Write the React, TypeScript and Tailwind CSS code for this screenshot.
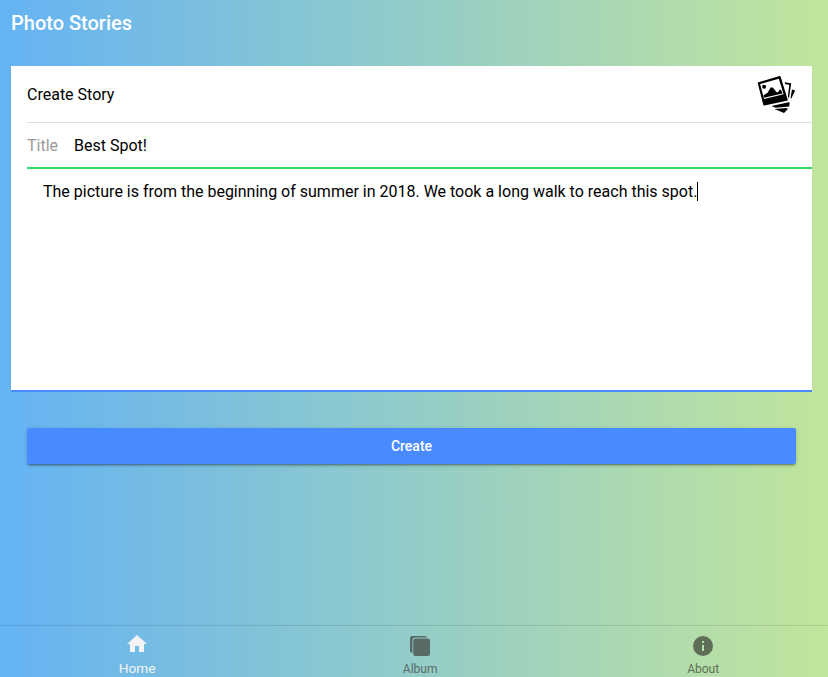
import React from "react";

function StoryIcon() {
  return (
    <svg className="block h-10 w-10" viewBox="0 0 40 40" aria-hidden="true">
      <path d="M28.6 8.2l6.6 1-2.3 15.6-1-2.8 1.4-11.2-4-.6z" />
      <path d="M36 15.4l3.2 1.2-3.9 8-.8-.6z" />
      <path d="M15.5 32l17-3.7 1.2.2-.5 3.9-13.5 1.3z" />
      <path d="M18.5 35l12-.9 1.4.9-3.9 4z" />
      <path d="M2.7 9.2L23.8 2.9 30.8 25.8 8.2 30.7z" stroke="#000" strokeWidth="1.8" strokeLinejoin="round" />
      <path d="M4.1 10L22.8 4.7 27.6 20.2 8.1 25z" fill="#fff" />
      <circle cx="8.1" cy="12.7" r="2" />
      <path d="M7.9 23.8l-.3-2.6 4-2.4 3-5.4 2.1.1 4 4.8 1.3-.1 1.8-2.7 1.3.4 1.5 3.5z" />
    </svg>
  );
}

function Tab({ label, active = false, children }: { label: string; active?: boolean; children: React.ReactNode }) {
  return (
    <button
      className={
        active
          ? "flex w-[283px] flex-col items-center pt-[6px] text-[#f4f4f4]"
          : "flex w-[283px] flex-col items-center pt-[8px] text-[#596b66] last:text-[#5f6e57]"
      }
    >
      <svg className="h-6 w-6 shrink-0" viewBox="0 0 24 24" fill="currentColor" aria-hidden="true">
        {children}
      </svg>
      <span className={active ? "mt-[4px] text-[13.7px] leading-4" : "mt-[3px] text-xs leading-4"}>{label}</span>
    </button>
  );
}

export default function App() {
  return (
    <div className="flex h-[677px] w-[828px] flex-col overflow-hidden bg-[linear-gradient(90deg,#64b3f4,#c2e59c)] font-[Roboto,sans-serif] text-black">
      <header className="h-[66px] pl-[11px] pt-[8px] text-xl font-medium leading-[30px] text-white">
        Photo Stories
      </header>

      <main className="flex flex-1 flex-col">
        <section className="ml-[11px] flex h-[326px] w-[801px] flex-col border-b-2 border-[#488aff] bg-white pl-4">
          <div className="flex h-[57px] items-center justify-between border-b border-[#dedede] pr-4">
            <h2 className="pt-[2px] text-base font-normal">Create Story</h2>
            <StoryIcon />
          </div>
          <label className="flex h-[46px] items-center border-b-2 border-[#32db64] pt-[2px] text-base">
            <span className="w-[47px] text-[#999]">Title</span>
            <span>Best Spot!</span>
          </label>
          <div className="flex items-center pl-4 pt-[13px] text-base leading-[19px]">
            <span>The picture is from the beginning of summer in 2018. We took a long walk to reach this spot.</span>
            <span className="h-[19px] w-px bg-black" />
          </div>
        </section>
        <button className="ml-[27px] mt-9 h-9 w-[769px] rounded-[2px] bg-[#488aff] text-sm font-medium text-white shadow-[0_2px_2px_0_rgba(0,0,0,0.14),0_3px_1px_-2px_rgba(0,0,0,0.2),0_1px_5px_0_rgba(0,0,0,0.12)]">
          Create
        </button>
      </main>

      <nav className="flex h-[52px] border-t border-black/10">
        <div className="-ml-[4.4px] flex">
          <Tab label="Home" active>
            <path d="M10 20v-6h4v6h5v-8h3L12 3 2 12h3v8z" />
          </Tab>
          <Tab label="Album">
            <path d="M2 17.2V4a2 2 0 0 1 2-2h13.2q1.6 0 1.9 1.5H7A2.6 2.6 0 0 0 4.4 6v13Q2 19 2 17.2z" />
            <rect x="5.2" y="4.4" width="16.8" height="17.6" rx="2.2" />
          </Tab>
          <Tab label="About">
            <path d="M12 2a10 10 0 1 0 0 20 10 10 0 0 0 0-20zm1 15h-2v-6h2zm0-8h-2V7h2z" />
          </Tab>
        </div>
      </nav>
    </div>
  );
}
